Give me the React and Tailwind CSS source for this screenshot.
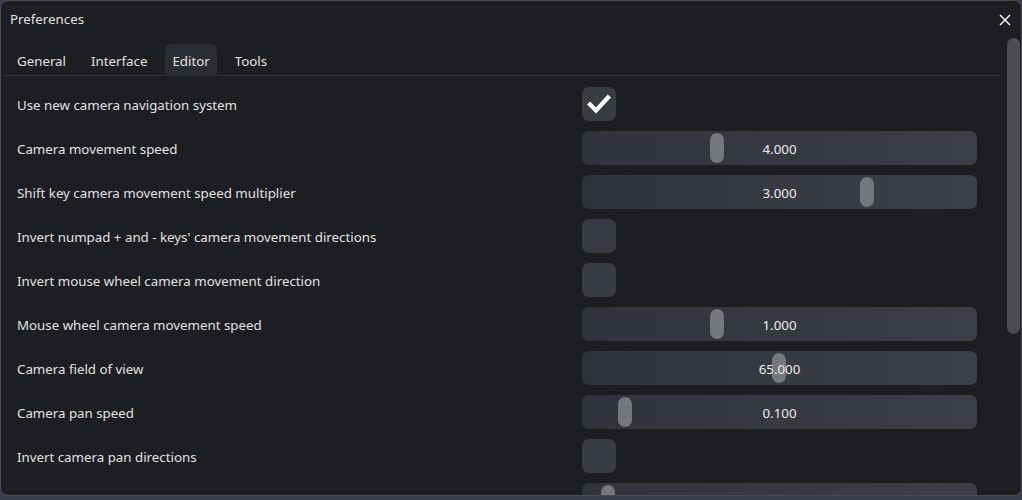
import React from "react";

const rows = [
  { label: "Use new camera navigation system", type: "check", checked: true },
  { label: "Camera movement speed", type: "slider", value: "4.000", pos: 134.5 },
  { label: "Shift key camera movement speed multiplier", type: "slider", value: "3.000", pos: 285 },
  { label: "Invert numpad + and - keys' camera movement directions", type: "check" },
  { label: "Invert mouse wheel camera movement direction", type: "check" },
  { label: "Mouse wheel camera movement speed", type: "slider", value: "1.000", pos: 134.5 },
  { label: "Camera field of view", type: "slider", value: "65.000", pos: 197 },
  { label: "Camera pan speed", type: "slider", value: "0.100", pos: 43 },
  { label: "Invert camera pan directions", type: "check" },
  { label: "Camera pan speed multiplier", type: "slider", value: "1.000", pos: 26 },
];

function Check({ checked }) {
  return (
    <div className="w-[34px] h-[34px] rounded-[7px] bg-[#393b43] flex items-center justify-center">
      {checked && (
        <svg width="24" height="20" viewBox="0 0 24 20">
          <polyline points="3,10.5 9,16.5 21,3.5" fill="none" stroke="#ffffff" strokeWidth="4.2" strokeLinecap="square" strokeLinejoin="miter" />
        </svg>
      )}
    </div>
  );
}

function Slider({ value, pos }) {
  return (
    <div className="relative w-[395px] h-[34px] rounded-[7px] bg-linear-to-r from-[#31333a] to-[#3d3f47] flex items-center justify-center">
      <div
        className="absolute top-[2px] w-[14px] h-[30px] rounded-full bg-[#75777c]"
        style={{ left: pos - 7 }}
      />
      <span className="relative translate-y-[2px] text-[13.3px] text-[#ececec]">{value}</span>
    </div>
  );
}

export default function App() {
  return (
    <div className="w-[1022px] h-[500px] bg-[#3a3c4a] overflow-hidden" style={{ fontFamily: '"Noto Sans", sans-serif' }}>
      <div className="w-[1022px] h-[496px] bg-[#1d1e22] border border-[#4a4b51] rounded-[8px] overflow-hidden flex flex-col">
        <div className="h-[37px] shrink-0 flex items-center justify-between pl-[9px] pr-[10px]">
          <span className="text-[13.3px] text-[#e2e2e2]">Preferences</span>
          <svg width="12" height="12" viewBox="0 0 12 12">
            <path d="M1 1 L11 11 M11 1 L1 11" stroke="#f2f2f2" strokeWidth="1.5" fill="none" />
          </svg>
        </div>
        <div className="flex flex-1 min-h-0">
          <div className="w-[999px] pl-[3px] flex flex-col min-h-0">
            <div className="flex gap-[11px] pt-[6px] pl-[6px] h-[38px] shrink-0 border-b border-[#33343a]">
              {["General", "Interface", "Editor", "Tools"].map((t) => (
                <div
                  key={t}
                  className={
                    "px-[7px] h-[32px] flex items-center rounded-t-[6px] text-[13.3px] text-[#e2e2e2] " +
                    (t === "Editor" ? "bg-[#2a2c33]" : "")
                  }
                >
                  <span className="translate-y-[2px]">{t}</span>
                </div>
              ))}
            </div>
            <div className="pt-[6px] pl-[13px] flex flex-col">
              {rows.map((r, i) => (
                <div key={i} className="h-[44px] shrink-0 flex items-center">
                  <div className="w-[565px] text-[13.3px] text-[#e2e2e2] translate-y-[2px]">{r.label}</div>
                  {r.type === "check" ? <Check checked={r.checked} /> : <Slider value={r.value} pos={r.pos} />}
                </div>
              ))}
            </div>
          </div>
          <div className="flex-1 flex justify-center pl-[5px]">
            <div className="w-[13px] h-[296px] rounded-full bg-[#4b4c4f]" />
          </div>
        </div>
      </div>
    </div>
  );
}
